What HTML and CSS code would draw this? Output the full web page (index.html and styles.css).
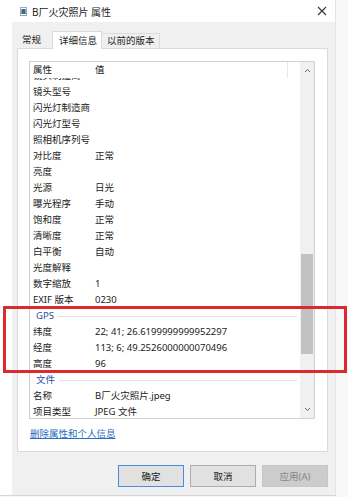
FILE: index.html
```html
<!DOCTYPE html>
<html lang="zh-CN">
<head>
  <meta charset="UTF-8" />
  <title>B厂火灾照片 属性</title>
  <link rel="stylesheet" href="styles.css">
</head>
<body>

<div class="window">
  <div class="titlebar">
    <svg class="title-icon" width="7" height="9" viewBox="0 0 7 9">
      <rect x="0.5" y="0.5" width="6" height="8" fill="#fff" stroke="#9aa4b2" />
      <rect x="1.5" y="2" width="4" height="5" fill="#2f5fa8" />
      <rect x="1.5" y="5" width="4" height="2" fill="#3d7d4a" />
    </svg>
    <span class="title-text">B厂火灾照片 属性</span>
    <svg class="close" width="10" height="10" viewBox="0 0 10 10">
      <path d="M1 1 L9 9 M9 1 L1 9" stroke="#333" stroke-width="1.1" fill="none" />
    </svg>
  </div>

  <div class="dialog">
    <div class="tabs">
      <div class="tab first">常规</div>
      <div class="tab active">详细信息</div>
      <div class="tab last">以前的版本</div>
    </div>

    <div class="panel">
      <div class="listview">
        <div class="list-main">
          <div class="list-header">
            <span class="col-name">属性</span>
            <span class="col-value">值</span>
          </div>
          <div class="list-body">
            <div class="rows">
              <div class="row"><span class="col-name">镜头制造商</span><span class="col-value"></span></div>
              <div class="row"><span class="col-name">镜头型号</span><span class="col-value"></span></div>
              <div class="row"><span class="col-name">闪光灯制造商</span><span class="col-value"></span></div>
              <div class="row"><span class="col-name">闪光灯型号</span><span class="col-value"></span></div>
              <div class="row"><span class="col-name">照相机序列号</span><span class="col-value"></span></div>
              <div class="row"><span class="col-name">对比度</span><span class="col-value">正常</span></div>
              <div class="row"><span class="col-name">亮度</span><span class="col-value"></span></div>
              <div class="row"><span class="col-name">光源</span><span class="col-value">日光</span></div>
              <div class="row"><span class="col-name">曝光程序</span><span class="col-value">手动</span></div>
              <div class="row"><span class="col-name">饱和度</span><span class="col-value">正常</span></div>
              <div class="row"><span class="col-name">清晰度</span><span class="col-value">正常</span></div>
              <div class="row"><span class="col-name">白平衡</span><span class="col-value">自动</span></div>
              <div class="row"><span class="col-name">光度解释</span><span class="col-value"></span></div>
              <div class="row"><span class="col-name">数字缩放</span><span class="col-value">1</span></div>
              <div class="row"><span class="col-name">EXIF 版本</span><span class="col-value">0230</span></div>
              <div class="group"><span>GPS</span><div class="group-line"></div></div>
              <div class="row"><span class="col-name">纬度</span><span class="col-value">22; 41; 26.6199999999952297</span></div>
              <div class="row"><span class="col-name">经度</span><span class="col-value">113; 6; 49.2526000000070496</span></div>
              <div class="row"><span class="col-name">高度</span><span class="col-value">96</span></div>
              <div class="group"><span>文件</span><div class="group-line"></div></div>
              <div class="row"><span class="col-name">名称</span><span class="col-value">B厂火灾照片.jpeg</span></div>
              <div class="row"><span class="col-name">项目类型</span><span class="col-value">JPEG 文件</span></div>
            </div>
          </div>
        </div>
        <div class="scrollbar">
          <svg class="arrow" width="7" height="5" viewBox="0 0 7 5"><path d="M1 4 L3.5 1.5 L6 4" stroke="#666" stroke-width="1" fill="none" /></svg>
          <div class="track">
            <div class="thumb"></div>
          </div>
          <svg class="arrow" width="7" height="5" viewBox="0 0 7 5"><path d="M1 1 L3.5 3.5 L6 1" stroke="#666" stroke-width="1" fill="none" /></svg>
        </div>
      </div>

      <a class="remove-link" href="#">删除属性和个人信息</a>
    </div>

    <div class="buttons">
      <button class="btn default">确定</button>
      <button class="btn">取消</button>
      <button class="btn disabled">应用(A)</button>
    </div>
  </div>
</div>

<div class="highlight"></div>

</body>
</html>
```

FILE: styles.css
```css
html, body {
  margin: 0; padding: 0;
  height: 100%;
  background: #f8f8f8;
  color: #1a1a1a;
  font-family: 'Noto Sans', 'Noto Sans CJK SC', sans-serif;
  font-size: 9.5px;
  overflow: hidden;
}

.window {
  width: 335px;
  border-right: 1px solid #e4e4e4;
  background: #fff;
  height: 495px;
  border-bottom: 1px solid #d6d6d6;
}

.titlebar {
  height: 22px;
  display: flex;
  align-items: center;
  padding-left: 20px;
  background: #fff;
}

.title-icon {
  margin-right: 5px;
}

.title-text {
  font-size: 10px;
  color: #222;
}

.close {
  margin-left: auto;
  margin-right: 8px;
}

.dialog {
  margin-left: 12px;
  height: 473px;
  background: #f0f0f0;
  padding: 0 7px 0 5px;
  box-sizing: border-box;
}

.tabs {
  height: 26px;
  display: flex;
  align-items: flex-end;
}

.tab {
  height: 15px;
  line-height: 14px;
  font-size: 9.5px;
  color: #222;
  white-space: nowrap;
  box-sizing: border-box;
}

.tab.first {
  padding: 0 11px 0 5px;
}

.tab.active {
  height: 18px;
  line-height: 17px;
  background: #fff;
  border: 1px solid #dadada;
  border-bottom: none;
  padding: 0 4px 0 6px;
  position: relative;
  top: 1px;
}

.tab.last {
  border: 1px solid #dcdcdc;
  border-bottom: none;
  border-left: none;
  background: #f0f0f0;
  padding: 0 4px 0 5px;
}

.panel {
  height: 404px;
  background: #fff;
  border: 1px solid #dadada;
  box-sizing: border-box;
  padding: 12px 0 0 11px;
}

.listview {
  width: 286px;
  height: 358px;
  border: 1px solid #cfcfcf;
  box-sizing: border-box;
  display: flex;
}

.list-main {
  flex: 1;
  display: flex;
  flex-direction: column;
  min-width: 0;
}

.list-header {
  height: 16px;
  line-height: 16px;
  display: flex;
  flex-shrink: 0;
  background: #fff;
  position: relative;
  z-index: 1;
}

.list-header .col-value {
  border-right: 1px solid #e8e8e8;
}

.list-body {
  flex: 1;
  overflow: hidden;
}

.rows {
  margin-top: -10px;
}

.row {
  height: 16px;
  line-height: 16px;
  display: flex;
  white-space: nowrap;
}

.col-name {
  width: 62px;
  padding-left: 3px;
  flex-shrink: 0;
}

.col-value {
  flex: 1;
  margin-right: 12px;
}

.group {
  height: 16px;
  line-height: 16px;
  display: flex;
  align-items: center;
  padding-left: 6px;
  color: #2b4ea6;
}

.group-line {
  flex: 1;
  height: 1px;
  background: #dde3ee;
  margin: 0 3px 0 4px;
}

.scrollbar {
  width: 14px;
  background: #f0f0f0;
  display: flex;
  flex-direction: column;
  align-items: center;
}

.arrow {
  margin: 6px 0;
  flex-shrink: 0;
}

.track {
  flex: 1;
  width: 100%;
  display: flex;
  flex-direction: column;
  justify-content: flex-end;
  padding-bottom: 47px;
  box-sizing: border-box;
}

.thumb {
  height: 100px;
  background: #c2c2c2;
  margin: 0 1px;
}

.remove-link {
  display: inline-block;
  margin-top: 8px;
  margin-left: 1px;
  color: #2a6dc0;
  text-decoration: underline;
  font-size: 9.5px;
  line-height: 14px;
}

.buttons {
  display: flex;
  justify-content: flex-end;
  gap: 6px;
  margin-top: 13px;
}

.btn {
  width: 66px;
  height: 22px;
  background: #e1e1e1;
  border: 1px solid #adadad;
  font-family: 'Noto Sans', 'Noto Sans CJK SC', sans-serif;
  font-size: 9.5px;
  color: #1a1a1a;
  padding: 0;
}

.btn.default {
  border-color: #4a8fd6;
}

.btn.disabled {
  background: #cccccc;
  border-color: #c6c6c6;
  color: #858585;
}

.highlight {
  position: absolute;
  left: 3px;
  top: 306px;
  width: 344px;
  height: 67px;
  border: 3px solid #d92a2e;
  box-sizing: border-box;
}
```
